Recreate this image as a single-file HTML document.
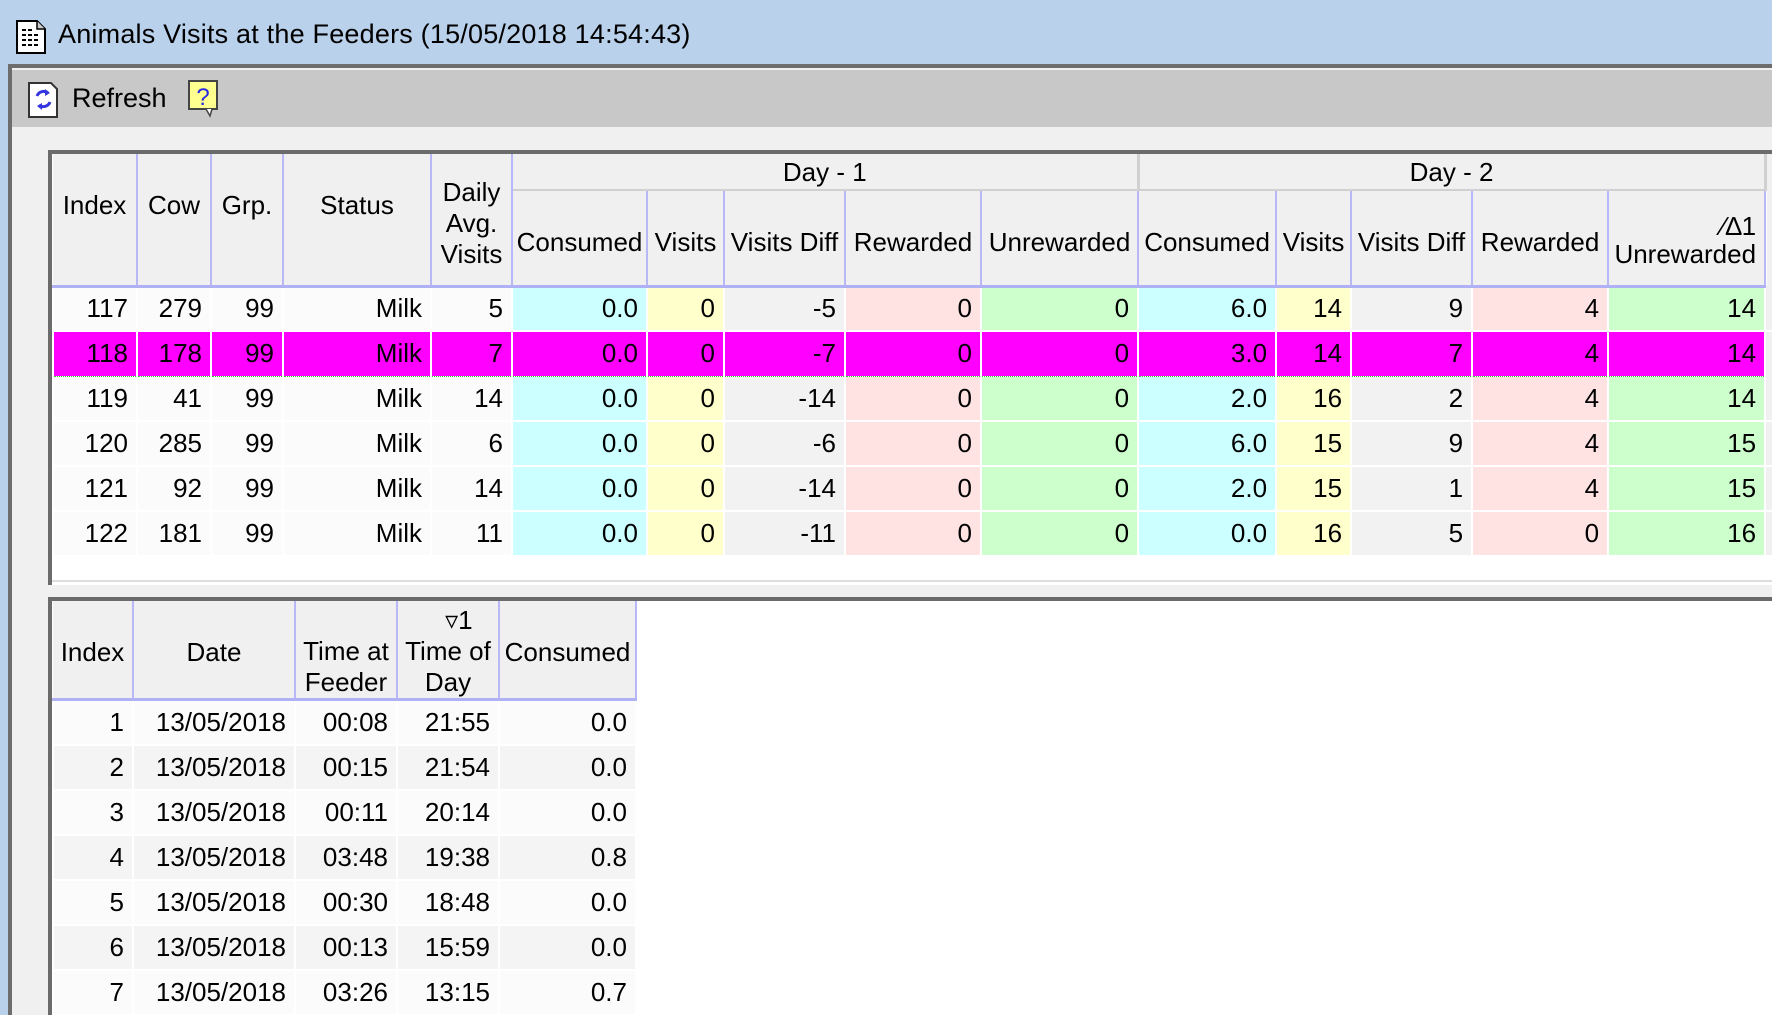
<!DOCTYPE html>
<html style="overflow:hidden;width:1772px;height:1015px"><head><meta charset="utf-8">
<style>
*{margin:0;padding:0;box-sizing:border-box}
body{width:1772px;height:1015px;overflow:hidden;background:#b9d1ea;font-family:"Liberation Sans",sans-serif;font-size:26px;color:#000;position:relative}
.title{position:absolute;left:58px;top:19px;font-size:27px;letter-spacing:0.2px}
.frame{position:absolute;left:8px;top:64px;width:1764px;height:951px;background:#f0f0f0;border-left:4px solid #6d6d6d;border-top:4px solid #6d6d6d}
.tb{position:absolute;left:12px;top:70px;width:1760px;height:57px;background:#c8c8c8}
.grid{position:absolute;background:#fff;border-left:4px solid #6b6b6b;border-top:4px solid #6b6b6b}
table{border-collapse:collapse;table-layout:fixed;position:absolute}
td,th{font-weight:normal;padding:0 8px 0 0;white-space:nowrap;overflow:hidden}
th{background:#f0f0f0;text-align:center;vertical-align:middle;border-right:2px solid #b8b8f8;border-bottom:3px solid #b0b0f4;line-height:31px;padding:0}
th.day{border-bottom:2px solid #d0d0d0;border-right:3px solid #d0d0d0;height:36px;line-height:26px}
td{text-align:right;height:45px;border:2px solid #fff;border-top:0}
.w{background:#fbfbfb}
.c{background:#ccffff}.y{background:#ffffcc}.g{background:#f2f2f2}.p{background:#ffe3e3}.gr{background:#ccffcc}
tr.m td{background:#ff00ff;border-top:1px dotted #3c3;border-bottom:1px dotted #3c3}
.sub th{padding-top:10px}
</style></head><body>
<svg style="position:absolute;left:16px;top:20px" width="30" height="34" viewBox="0 0 30 34"><path d="M1 1h20l8 8v24H1z" fill="#fff" stroke="#000" stroke-width="2"/><path d="M21 1v8h8" fill="#ccc" stroke="#000" stroke-width="1.5"/><path d="M6 10h10M6 15h16M6 20h16M6 25h16" stroke="#000" stroke-width="2" stroke-dasharray="4 2"/></svg>
<div class="title">Animals Visits at the Feeders (15/05/2018 14:54:43)</div>
<div class="frame"></div>
<div class="tb"></div>
<svg style="position:absolute;left:28px;top:82px" width="31" height="36" viewBox="0 0 31 36"><path d="M1 1h22l6 6v28H1z" fill="#fff" stroke="#333" stroke-width="2"/><path d="M9 14a7 7 0 0 1 11-3M22 20a7 7 0 0 1-11 3" fill="none" stroke="#3535e0" stroke-width="3"/><path d="M17 7l5 4-5 3zM14 21l-5 3 5 4z" fill="#3535e0"/></svg>
<div style="position:absolute;left:72px;top:83px;font-size:27px">Refresh</div>
<svg style="position:absolute;left:188px;top:80px" width="32" height="38" viewBox="0 0 32 38"><rect x="1" y="1" width="28" height="28" fill="#ffff90" stroke="#444" stroke-width="2"/><path d="M18 29l4 7 2-7" fill="#fff" stroke="#444" stroke-width="1.5"/><text x="15" y="25" font-size="24" fill="#2828e0" text-anchor="middle" font-family="Liberation Sans">?</text></svg>

<div class="grid" style="left:48px;top:150px;width:1724px;height:435px"></div>
<div style="position:absolute;left:52px;top:580px;width:1720px;height:2px;background:#ddd"></div>
<table style="left:52px;top:154px;width:1720px">
<colgroup><col style="width:84px"><col style="width:74px"><col style="width:72px"><col style="width:148px"><col style="width:81px"><col style="width:135px"><col style="width:77px"><col style="width:121px"><col style="width:136px"><col style="width:157px"><col style="width:138px"><col style="width:75px"><col style="width:121px"><col style="width:136px"><col style="width:157px"><col style="width:8px"></colgroup>
<tr><th rowspan="2" style="padding-bottom:28px">Index</th><th rowspan="2" style="padding-bottom:28px">Cow</th><th rowspan="2" style="padding-bottom:28px">Grp.</th><th rowspan="2" style="padding-bottom:28px">Status</th><th rowspan="2" style="padding-top:8px">Daily<br>Avg.<br>Visits</th><th colspan="5" class="day">Day - 1</th><th colspan="5" class="day">Day - 2</th><th rowspan="2" style="border:0;background:#f0f0f0"></th></tr>
<tr class="sub" style="height:96px"><th>Consumed</th><th>Visits</th><th>Visits Diff</th><th>Rewarded</th><th>Unrewarded</th><th>Consumed</th><th>Visits</th><th>Visits Diff</th><th>Rewarded</th><th style="text-align:right;padding-right:8px;line-height:28px;padding-top:4px">&#8725;&#8710;1<br>Unrewarded</th></tr>
<tr><td class="w">117</td><td class="w">279</td><td class="w">99</td><td class="w">Milk</td><td class="w">5</td><td class="c">0.0</td><td class="y">0</td><td class="g">-5</td><td class="p">0</td><td class="gr">0</td><td class="c">6.0</td><td class="y">14</td><td class="g">9</td><td class="p">4</td><td class="gr">14</td><td style="background:#f0f0f0"></td></tr>
<tr class="m"><td>118</td><td>178</td><td>99</td><td>Milk</td><td>7</td><td>0.0</td><td>0</td><td>-7</td><td>0</td><td>0</td><td>3.0</td><td>14</td><td>7</td><td>4</td><td>14</td><td style="background:#f0f0f0!important;border:0"></td></tr>
<tr><td class="w">119</td><td class="w">41</td><td class="w">99</td><td class="w">Milk</td><td class="w">14</td><td class="c">0.0</td><td class="y">0</td><td class="g">-14</td><td class="p">0</td><td class="gr">0</td><td class="c">2.0</td><td class="y">16</td><td class="g">2</td><td class="p">4</td><td class="gr">14</td><td style="background:#f0f0f0"></td></tr>
<tr><td class="w">120</td><td class="w">285</td><td class="w">99</td><td class="w">Milk</td><td class="w">6</td><td class="c">0.0</td><td class="y">0</td><td class="g">-6</td><td class="p">0</td><td class="gr">0</td><td class="c">6.0</td><td class="y">15</td><td class="g">9</td><td class="p">4</td><td class="gr">15</td><td style="background:#f0f0f0"></td></tr>
<tr><td class="w">121</td><td class="w">92</td><td class="w">99</td><td class="w">Milk</td><td class="w">14</td><td class="c">0.0</td><td class="y">0</td><td class="g">-14</td><td class="p">0</td><td class="gr">0</td><td class="c">2.0</td><td class="y">15</td><td class="g">1</td><td class="p">4</td><td class="gr">15</td><td style="background:#f0f0f0"></td></tr>
<tr><td class="w">122</td><td class="w">181</td><td class="w">99</td><td class="w">Milk</td><td class="w">11</td><td class="c">0.0</td><td class="y">0</td><td class="g">-11</td><td class="p">0</td><td class="gr">0</td><td class="c">0.0</td><td class="y">16</td><td class="g">5</td><td class="p">0</td><td class="gr">16</td><td style="background:#f0f0f0"></td></tr>
</table>

<div class="grid" style="left:48px;top:597px;width:1724px;height:418px"></div>
<table style="left:52px;top:601px;width:583px">
<colgroup><col style="width:80px"><col style="width:162px"><col style="width:102px"><col style="width:102px"><col style="width:137px"></colgroup>
<tr style="height:96px"><th style="padding-top:6px">Index</th><th style="padding-top:6px">Date</th><th style="padding-top:34px">Time at<br>Feeder</th><th style="text-align:center;padding-top:4px">&nbsp;&nbsp;&nbsp;&#9663;1<br>Time of<br>Day</th><th style="padding-top:6px">Consumed</th></tr>
<tr><td class="w">1</td><td class="w">13/05/2018</td><td class="w">00:08</td><td class="w">21:55</td><td class="w">0.0</td></tr>
<tr><td style="background:#f4f4f4">2</td><td style="background:#f4f4f4">13/05/2018</td><td style="background:#f4f4f4">00:15</td><td style="background:#f4f4f4">21:54</td><td style="background:#f4f4f4">0.0</td></tr>
<tr><td class="w">3</td><td class="w">13/05/2018</td><td class="w">00:11</td><td class="w">20:14</td><td class="w">0.0</td></tr>
<tr><td style="background:#f4f4f4">4</td><td style="background:#f4f4f4">13/05/2018</td><td style="background:#f4f4f4">03:48</td><td style="background:#f4f4f4">19:38</td><td style="background:#f4f4f4">0.8</td></tr>
<tr><td class="w">5</td><td class="w">13/05/2018</td><td class="w">00:30</td><td class="w">18:48</td><td class="w">0.0</td></tr>
<tr><td style="background:#f4f4f4">6</td><td style="background:#f4f4f4">13/05/2018</td><td style="background:#f4f4f4">00:13</td><td style="background:#f4f4f4">15:59</td><td style="background:#f4f4f4">0.0</td></tr>
<tr><td class="w">7</td><td class="w">13/05/2018</td><td class="w">03:26</td><td class="w">13:15</td><td class="w">0.7</td></tr>
</table>
</body></html>
